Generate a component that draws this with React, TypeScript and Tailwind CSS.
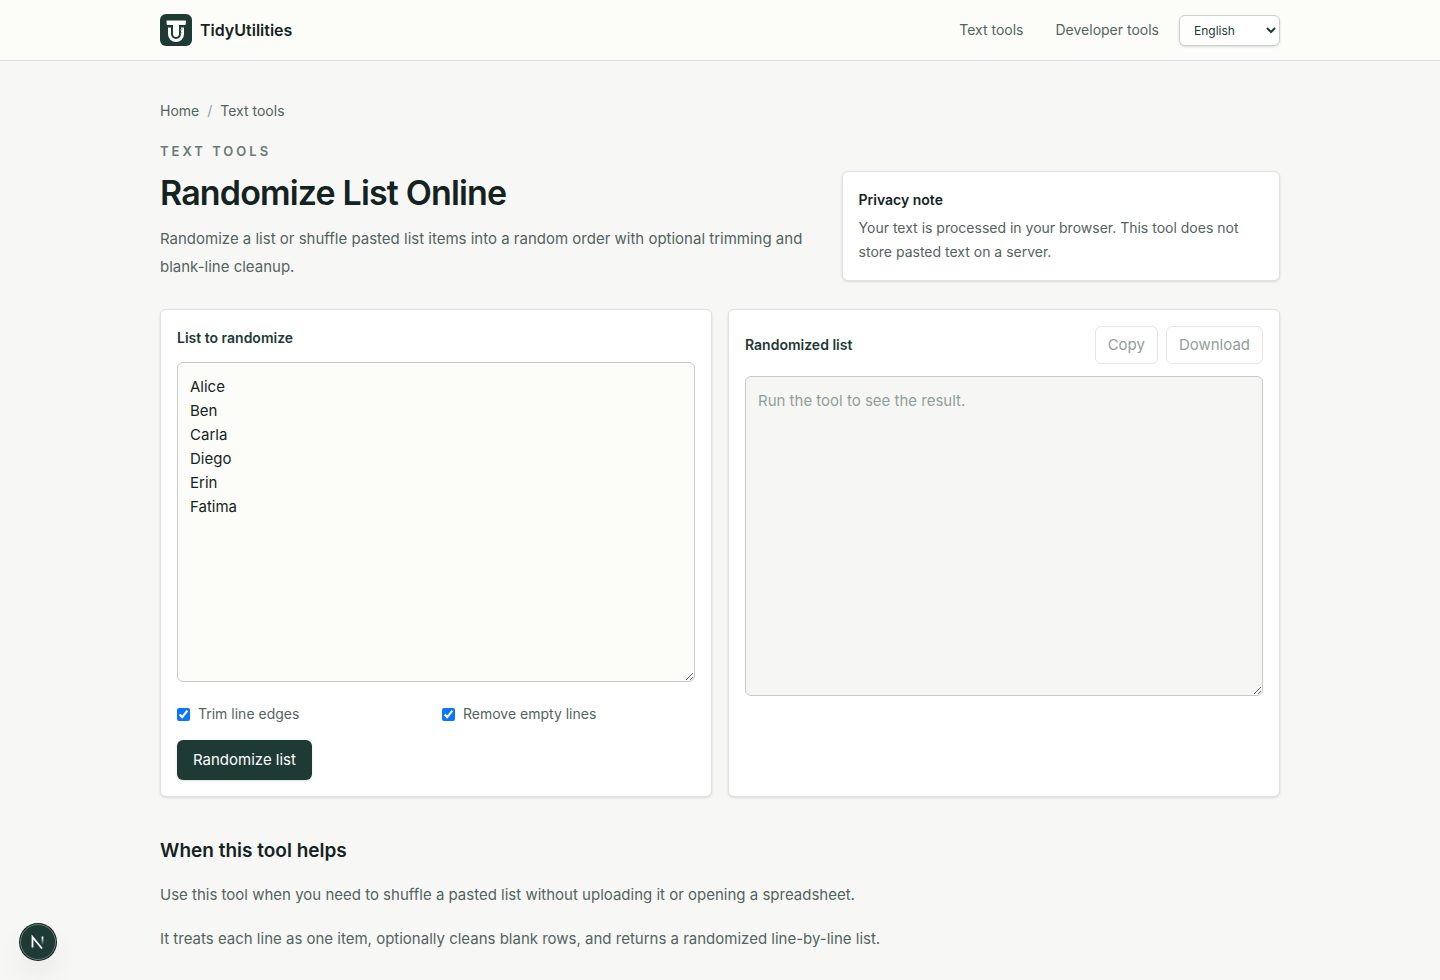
import { useState } from 'react';
import classNames from 'clsx';

const NAV_LINKS = [
  { label: 'Text tools', href: '#text-tools' },
  { label: 'Developer tools', href: '#developer-tools' },
];

const Logo = () => (
  <svg viewBox="0 0 32 32" className="size-8" aria-hidden="true">
    <rect width="32" height="32" rx="6" fill="#1d3a35" />
    <path
      d="M9.500 13.500V20a6.500 6.500 0 0 0 13 0v-6.500"
      fill="none"
      stroke="#fcfdf8"
      strokeWidth="3"
    />
    <path
      d="M7 6.500h18.500c.4 0 .7.400.600.800l-.5 3.200c-.1.400-.3.600-.7.600H19v8.900c0 1.800-1.300 3-3 3s-3-1.200-3-3v-8.900H7.500c-.4 0-.7-.2-.7-.6l-.4-3.200c0-.4.200-.8.600-.8z"
      fill="#fcfdf8"
    />
    <path d="M19.500 16l2-1.500h2l-2 2zM20.500 19l2-1.500v1l-2 1.500z" fill="#9fada9" />
  </svg>
);

const Header = () => (
  <header className="border-b border-[#dde0de] bg-[#fcfdf8]">
    <div className="mx-auto flex h-15 max-w-6xl items-center justify-between px-4">
      <a href="#home" className="flex items-center gap-2 font-semibold text-[#14231f]">
        <Logo />
        TidyUtilities
      </a>
      <div className="flex items-center gap-5">
        <nav className="flex gap-8 text-sm text-[#52645f]">
          {NAV_LINKS.map((link) => (
            <a key={link.href} href={link.href}>
              {link.label}
            </a>
          ))}
        </nav>
        <select
          aria-label="Language"
          className="h-[31px] w-[101px] rounded-md border border-[#c9d0cd] bg-white pl-2.5 text-xs text-[#1d3a35] shadow-sm"
        >
          <option>English</option>
        </select>
      </div>
    </div>
  </header>
);

const Intro = () => (
  <section className="mt-5 grid items-end gap-6 md:grid-cols-[3fr_2fr]">
    <div>
      <p className="text-[13px] leading-5 font-semibold tracking-[3px] text-[#697a75] uppercase">
        Text tools
      </p>
      <h1 className="mt-3 text-[34px] leading-10 font-semibold tracking-tight text-[#14231f]">
        Randomize List Online
      </h1>
      <p className="mt-3 text-[15px] leading-7 text-[#52645f]">
        Randomize a list or shuffle pasted list items into a random order with optional trimming
        and blank-line cleanup.
      </p>
    </div>
    <aside className="rounded-md border border-[#dde2e0] bg-white p-4 text-sm leading-6 shadow-sm">
      <h2 className="font-semibold text-[#14231f]">Privacy note</h2>
      <p className="mt-1 text-[#52645f]">
        Your text is processed in your browser. This tool does not store pasted text on a server.
      </p>
    </aside>
  </section>
);

const Option = ({ id, label }: { id: string; label: string }) => (
  <label htmlFor={id} className="flex items-center gap-2 text-sm leading-6 text-[#52645f]">
    <input id={id} type="checkbox" defaultChecked className="size-[13px] accent-[#0d75fb]" />
    {label}
  </label>
);

const panel = 'rounded-md border border-[#dde2e0] bg-white p-4 shadow-sm';
const box =
  'mt-3 block h-80 w-full resize-y rounded-md border border-[#c3cbc8] p-3 text-[15px] leading-6';
const outlineButton = 'h-[38px] rounded-md border border-[#e4e7e6] px-3 text-[15px]';

const Workspace = () => {
  const [text, setText] = useState('Alice\nBen\nCarla\nDiego\nErin\nFatima');
  const [result, setResult] = useState('');

  const randomize = () => {
    const lines = text.split('\n').filter(Boolean);
    setResult(lines.sort(() => Math.random() - 0.5).join('\n'));
  };

  return (
    <section className="mt-7 grid gap-4 md:grid-cols-2">
      <div className={panel}>
        <label htmlFor="input" className="block text-sm leading-6 font-semibold text-[#1d3a35]">
          List to randomize
        </label>
        <textarea
          id="input"
          value={text}
          onChange={(e) => setText(e.target.value)}
          className={classNames(box, 'bg-[#fcfdf8] text-[#14231f]')}
        />
        <div className="mt-5 grid grid-cols-2 gap-3">
          <Option id="trim" label="Trim line edges" />
          <Option id="remove-empty" label="Remove empty lines" />
        </div>
        <button
          type="button"
          onClick={randomize}
          className="mt-3.5 h-10 rounded-md bg-[#1d3a35] px-4 text-[15px] text-white shadow-sm"
        >
          Randomize list
        </button>
      </div>
      <div className={panel}>
        <div className="flex items-center justify-between">
          <label htmlFor="output" className="text-sm font-semibold text-[#1d3a35]">
            Randomized list
          </label>
          <div className="flex gap-2 text-[#929e9a]">
            <button type="button" disabled className={outlineButton}>
              Copy
            </button>
            <button type="button" disabled className={outlineButton}>
              Download
            </button>
          </div>
        </div>
        <textarea
          id="output"
          readOnly
          value={result}
          placeholder="Run the tool to see the result."
          className={classNames(box, 'bg-[#f6f7f5] text-[#14231f] placeholder:text-[#929e9a]')}
        />
      </div>
    </section>
  );
};

const DevBadge = () => (
  <button
    type="button"
    aria-label="Open dev tools"
    className="fixed bottom-5 left-5 flex size-9 items-center justify-center rounded-full border border-[#6c7f79] bg-[#1d3a35] shadow-[0_0_0_1px_#14231f,0_16px_32px_-8px_rgba(0,0,0,0.2)]"
  >
    <svg viewBox="0 0 16 16" className="size-4" fill="none" aria-hidden="true">
      <defs>
        <linearGradient id="stem" x1="0" y1="3" x2="0" y2="11" gradientUnits="userSpaceOnUse">
          <stop stopColor="#fff" />
          <stop offset="1" stopColor="#fff" stopOpacity="0" />
        </linearGradient>
      </defs>
      <path d="M2.500 13.500V3L12 14.500" stroke="#fff" strokeWidth="1.800" />
      <path d="M12.500 2.500v8.500" stroke="url(#stem)" strokeWidth="1.800" />
    </svg>
  </button>
);

export default function App() {
  return (
    <div className="min-h-screen bg-[#f7f8f6] font-[Inter,sans-serif]">
      <Header />
      <main className="mx-auto max-w-6xl px-4 pt-10 pb-6">
        <nav aria-label="Breadcrumb" className="flex gap-2 text-sm text-[#52645f]">
          <a href="#home">Home</a>
          <span className="text-[#929e9a]">/</span>
          <a href="#text-tools">Text tools</a>
        </nav>
        <Intro />
        <Workspace />
        <section className="mt-10 text-[15px] leading-7 text-[#52645f]">
          <h2 className="text-[19px] leading-7 font-semibold text-[#14231f]">
            When this tool helps
          </h2>
          <p className="mt-4">
            Use this tool when you need to shuffle a pasted list without uploading it or opening a
            spreadsheet.
          </p>
          <p className="mt-4">
            It treats each line as one item, optionally cleans blank rows, and returns a randomized
            line-by-line list.
          </p>
        </section>
      </main>
      <DevBadge />
    </div>
  );
}
